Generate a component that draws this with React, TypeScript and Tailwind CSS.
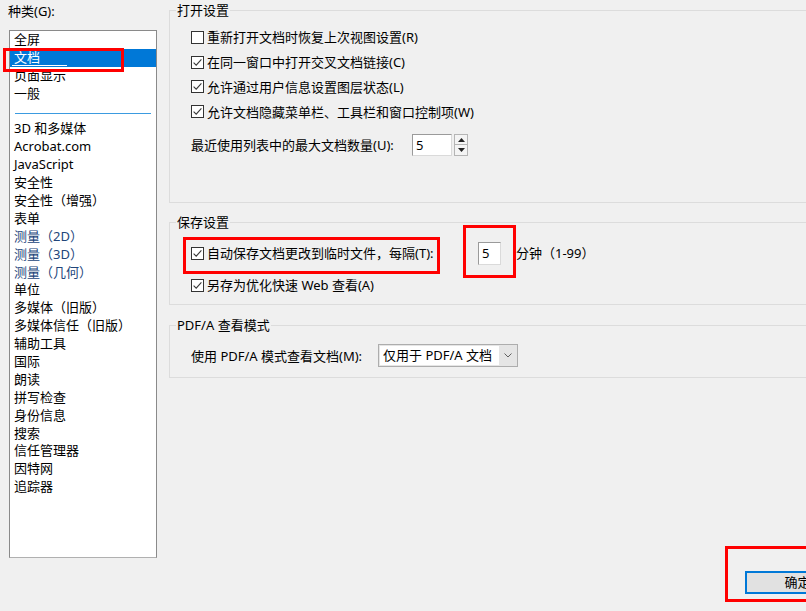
import React from 'react';

const categories = [
  '全屏',
  '文档',
  '页面显示',
  '一般',
  '---',
  '3D 和多媒体',
  'Acrobat.com',
  'JavaScript',
  '安全性',
  '安全性（增强）',
  '表单',
  '测量（2D）',
  '测量（3D）',
  '测量（几何）',
  '单位',
  '多媒体（旧版）',
  '多媒体信任（旧版）',
  '辅助工具',
  '国际',
  '朗读',
  '拼写检查',
  '身份信息',
  '搜索',
  '信任管理器',
  '因特网',
  '追踪器',
];

const Checkbox = ({ checked }: { checked: boolean }) => (
  <span className="w-[13px] h-[13px] shrink-0 border border-[#333333] bg-white flex items-center justify-center">
    {checked && (
      <svg width="11" height="11" viewBox="0 0 11 11">
        <path d="M1.6 5.6 L4.2 8.2 L9.4 2.4" fill="none" stroke="#3a3a3a" strokeWidth="1.1" />
      </svg>
    )}
  </span>
);

const CheckRow = ({ checked, label, className = '' }: { checked: boolean; label: string; className?: string }) => (
  <div className={`flex items-center ${className}`}>
    <Checkbox checked={checked} />
    <span className="ml-[3px] whitespace-nowrap leading-[16px]">{label}</span>
  </div>
);

const Group = ({ title, className, children }: { title: string; className: string; children: React.ReactNode }) => (
  <div className={`border border-[#dcdcdc] ${className}`}>
    <div className="-mt-[9px] ml-[6px] w-fit h-[16px] leading-[16px] px-[1px] bg-[#f0f0f0]">{title}</div>
    {children}
  </div>
);

const App = () => {
  return (
    <div
      className="relative w-[806px] h-[611px] overflow-hidden bg-[#f0f0f0] text-[13px] text-black"
      style={{ fontFamily: '"Noto Sans", "Noto Sans CJK SC", sans-serif' }}
    >
      <div className="flex h-[558px]">
        {/* left: category list */}
        <div className="w-[169px] shrink-0 pl-[8px] pt-[3px]">
          <div className="h-[16px] leading-[16px]">种类(G):</div>
          <div className="mt-[11px] ml-[1px] w-[148px] h-[528px] border border-[#8a8a8a] border-b-[#b0b0b0] bg-white">
            {categories.map((c, i) => {
              if (c === '---') {
                return (
                  <div key={i} className="h-[17.9px] px-[5px] pt-[10px]">
                    <div className="h-px bg-[#3b9be0]" />
                  </div>
                );
              }
              const selected = c === '文档';
              const blue = c.startsWith('测量');
              return (
                <div
                  key={i}
                  className={`relative h-[17.9px] leading-[17.9px] pl-[4px] whitespace-nowrap ${
                    selected ? 'bg-[#0078d7] text-white' : blue ? 'text-[#22457a]' : ''
                  }`}
                >
                  {c}
                  {selected && <span className="absolute left-[2px] bottom-[1px] w-[55px] h-px bg-white" />}
                </div>
              );
            })}
          </div>
        </div>

        {/* right: settings */}
        <div className="w-[660px] shrink-0 pt-[10px]">
          <Group title="打开设置" className="h-[193px]">
            <div className="pl-[21px] mt-[7px]">
              <CheckRow checked={false} label="重新打开文档时恢复上次视图设置(R)" className="h-[24.8px]" />
              <CheckRow checked label="在同一窗口中打开交叉文档链接(C)" className="h-[24.8px]" />
              <CheckRow checked label="允许通过用户信息设置图层状态(L)" className="h-[24.8px]" />
              <CheckRow checked label="允许文档隐藏菜单栏、工具栏和窗口控制项(W)" className="h-[24.8px]" />
              <div className="flex items-center h-[22px] mt-[10px]">
                <span className="w-[221px] whitespace-nowrap leading-[16px]">最近使用列表中的最大文档数量(U):</span>
                <div className="w-[40px] h-[22px] border border-[#9a9a9a] border-r-[#dadada] border-b-[#dadada] bg-white pl-[3px] leading-[20px]">
                  5
                </div>
                <div className="ml-[2px] w-[14px] h-[22px] flex flex-col">
                  <div className="h-[11px] border border-[#b5b5b5] bg-[#f4f4f4] flex items-center justify-center">
                    <svg width="7" height="4" viewBox="0 0 7 4">
                      <path d="M3.5 0 L7 4 L0 4 Z" fill="#222" />
                    </svg>
                  </div>
                  <div className="h-[11px] border border-t-0 border-[#b5b5b5] bg-[#f4f4f4] flex items-center justify-center">
                    <svg width="7" height="4" viewBox="0 0 7 4">
                      <path d="M0 0 L7 0 L3.5 4 Z" fill="#222" />
                    </svg>
                  </div>
                </div>
              </div>
            </div>
          </Group>

          <Group title="保存设置" className="mt-[19px] h-[83px]">
            <div className="pl-[21px] mt-[10px]">
              <div className="flex items-center h-[26px]">
                <CheckRow checked label="自动保存文档更改到临时文件，每隔(T):" className="w-[287px]" />
                <div className="w-[23px] h-[23px] border border-[#9a9a9a] border-r-[#dadada] border-b-[#dadada] bg-white pl-[3px] leading-[21px]">
                  5
                </div>
                <span className="ml-[15px] whitespace-nowrap leading-[16px]">分钟（1-99）</span>
              </div>
              <CheckRow checked label="另存为优化快速 Web 查看(A)" className="mt-[6px] h-[26px]" />
            </div>
          </Group>

          <Group title="PDF/A 查看模式" className="mt-[20px] h-[53px]">
            <div className="pl-[21px] mt-[11px] flex items-center h-[23px]">
              <span className="w-[187px] whitespace-nowrap leading-[16px]">使用 PDF/A 模式查看文档(M):</span>
              <div className="w-[140px] h-[23px] border border-[#adadad] bg-[#e5e5e5] flex p-[1px]">
                <div className="w-[119px] h-full bg-white pl-[3px] leading-[19px] whitespace-nowrap">仅用于 PDF/A 文档</div>
                <div className="flex-1 flex items-center justify-center">
                  <svg width="8" height="5" viewBox="0 0 8 5">
                    <path d="M0.5 0.5 L4 4 L7.5 0.5" fill="none" stroke="#606060" strokeWidth="1" />
                  </svg>
                </div>
              </div>
            </div>
          </Group>
        </div>
      </div>

      {/* footer */}
      <div className="flex pt-[13px] pl-[745px]">
        <button className="w-[105px] h-[23px] shrink-0 border-2 border-[#0078d7] bg-[#e1e1e1] leading-[19px] text-center">
          确定
        </button>
      </div>

      {/* red annotation boxes */}
      <div className="absolute left-[3px] top-[48px] w-[121px] h-[24px] border-[3px] border-[#ff0000]" />
      <div className="absolute left-[183px] top-[237px] w-[257px] h-[37px] border-[3px] border-[#ff0000]" />
      <div className="absolute left-[463px] top-[225px] w-[53px] h-[53px] border-[3px] border-[#ff0000]" />
      <div className="absolute left-[725px] top-[546px] w-[100px] h-[56px] border-[3px] border-[#ff0000]" />
    </div>
  );
};

export default App;
